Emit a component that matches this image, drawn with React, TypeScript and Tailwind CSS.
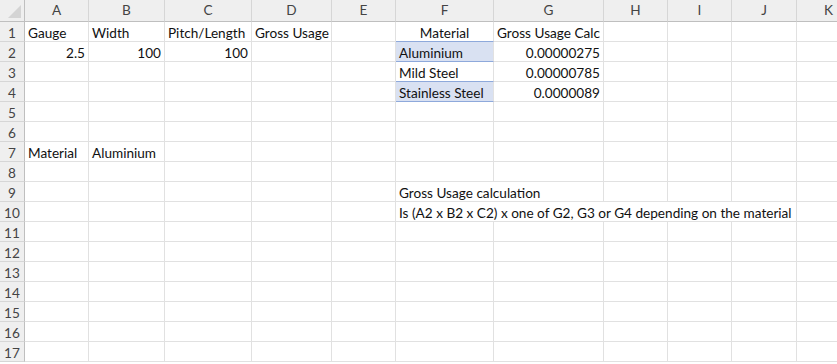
import React from "react";

const COLS = ["A", "B", "C", "D", "E", "F", "G", "H", "I", "J", "K"];

type Cell = {
  text?: string;
  align?: "left" | "right" | "center";
  span?: number;
  band?: "fill" | "plain";
};

// row number -> column index -> cell
const DATA: Record<number, Record<number, Cell>> = {
  1: {
    0: { text: "Gauge" },
    1: { text: "Width" },
    2: { text: "Pitch/Length" },
    3: { text: "Gross Usage" },
    5: { text: "Material", align: "center", band: "plain" },
    6: { text: "Gross Usage Calc", align: "center" },
  },
  2: {
    0: { text: "2.5", align: "right" },
    1: { text: "100", align: "right" },
    2: { text: "100", align: "right" },
    5: { text: "Aluminium", band: "fill" },
    6: { text: "0.00000275", align: "right" },
  },
  3: {
    5: { text: "Mild Steel", band: "plain" },
    6: { text: "0.00000785", align: "right" },
  },
  4: {
    5: { text: "Stainless Steel", band: "fill" },
    6: { text: "0.0000089", align: "right" },
  },
  7: {
    0: { text: "Material" },
    1: { text: "Aluminium" },
  },
  9: {
    5: { text: "Gross Usage calculation", span: 2 },
  },
  10: {
    5: { text: "Is (A2 x B2 x C2) x one of G2, G3 or G4 depending on the material", span: 5 },
  },
};

const gridCols =
  "grid grid-cols-[25px_64px_76px_87px_80px_64px_98px_110px_64px_64px_65px_64px]";

function Row({ n }: { n: number }) {
  const row = DATA[n] ?? {};
  const cells: React.ReactNode[] = [];
  let i = 0;
  while (i < COLS.length) {
    const c = row[i];
    const span = c?.span ?? 1;
    const align =
      c?.align === "right" ? "justify-end" : c?.align === "center" ? "justify-center" : "justify-start";
    const bg = c?.band === "fill" ? "bg-[#d9e1f2]" : "bg-white";
    const bottom = c?.band ? "border-b-[#8ea9db]" : "border-b-[#e1e1e1]";
    cells.push(
      <div
        key={i}
        style={span > 1 ? { gridColumn: `span ${span} / span ${span}` } : undefined}
        className={`flex h-5 items-end ${align} ${bg} border-b border-r border-r-[#e1e1e1] ${bottom} px-[3px] whitespace-nowrap overflow-visible`}
      >
        <span>{c?.text}</span>
      </div>
    );
    i += span;
  }
  return (
    <div className={gridCols}>
      <div className="flex h-5 items-end justify-center bg-[#efefef] border-r border-r-[#bfbfbf] border-b border-b-[#d6d6d6] text-[#444]">
        <span>{n}</span>
      </div>
      {cells}
    </div>
  );
}

export default function App() {
  const rows = Array.from({ length: 17 }, (_, k) => k + 1);
  return (
    <div className="w-[837px] h-[364px] overflow-hidden bg-white text-[13.6px] leading-none text-[#111] font-['Lato','Open_Sans',sans-serif]">
      <div className={`${gridCols} h-[22px]`}>
        <div className="relative bg-[#efefef] border-r border-r-[#bfbfbf] border-b border-b-[#bfbfbf]">
          <svg className="absolute right-[3px] bottom-[3px]" width="13" height="13" viewBox="0 0 13 13">
            <polygon points="13,0 13,13 0,13" fill="#d4d4d4" />
          </svg>
        </div>
        {COLS.map((c) => (
          <div
            key={c}
            className="flex items-center justify-center bg-[#efefef] border-r border-r-[#d6d6d6] border-b border-b-[#bfbfbf] text-[#444]"
          >
            {c}
          </div>
        ))}
      </div>
      {rows.map((n) => (
        <Row key={n} n={n} />
      ))}
    </div>
  );
}
